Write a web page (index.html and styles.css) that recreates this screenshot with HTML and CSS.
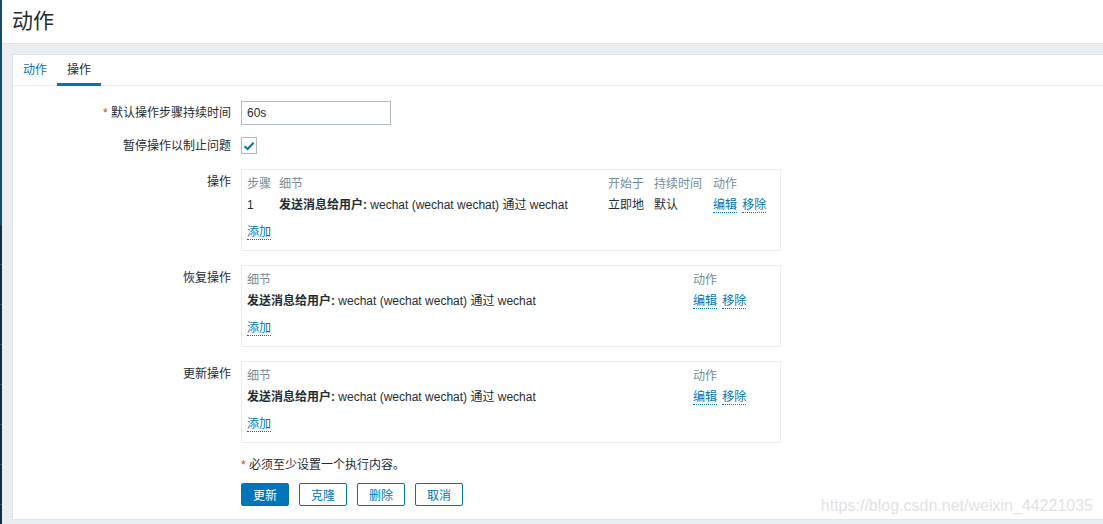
FILE: index.html
```html
<!DOCTYPE html>
<html lang="zh">
<head>
<meta charset="utf-8">
<title>动作</title>
<link rel="stylesheet" href="styles.css">
</head>
<body>
<div class="layout">
  <div class="sidebar"><div class="sb-top"></div><div class="sb-bottom"></div></div>
  <main class="main">
    <header class="page-header"><h1>动作</h1></header>
    <section class="card">
      <nav class="tabs">
        <a class="tab">动作</a>
        <a class="tab active">操作</a>
      </nav>
      <div class="form">
        <div class="row row-input">
          <label class="label"><span class="req">*</span> 默认操作步骤持续时间</label>
          <div class="field"><input class="text-input" type="text" value="60s"></div>
        </div>
        <div class="row row-check">
          <label class="label">暂停操作以制止问题</label>
          <div class="field">
            <span class="checkbox"><svg width="12" height="10" viewBox="0 0 12 10"><path d="M1.5 5.2 L4.6 8 L10.6 1.8" fill="none" stroke="#0275b8" stroke-width="2"/></svg></span>
          </div>
        </div>
        <div class="row row-box">
          <label class="label box-label">操作</label>
          <div class="field">
            <div class="box">
              <table class="ops">
                <colgroup><col style="width:32px"><col style="width:329px"><col style="width:46px"><col style="width:59px"><col></colgroup>
                <thead><tr><th>步骤</th><th>细节</th><th>开始于</th><th>持续时间</th><th>动作</th></tr></thead>
                <tbody><tr><td>1</td><td><b>发送消息给用户:</b> wechat (wechat wechat) 通过 wechat</td><td>立即地</td><td>默认</td><td><a class="link">编辑</a> <a class="link">移除</a></td></tr></tbody>
              </table>
              <div class="add"><a class="link">添加</a></div>
            </div>
          </div>
        </div>
        <div class="row row-box">
          <label class="label box-label">恢复操作</label>
          <div class="field">
            <div class="box">
              <table class="ops">
                <colgroup><col style="width:446px"><col></colgroup>
                <thead><tr><th>细节</th><th>动作</th></tr></thead>
                <tbody><tr><td><b>发送消息给用户:</b> wechat (wechat wechat) 通过 wechat</td><td><a class="link">编辑</a> <a class="link">移除</a></td></tr></tbody>
              </table>
              <div class="add"><a class="link">添加</a></div>
            </div>
          </div>
        </div>
        <div class="row row-box">
          <label class="label box-label">更新操作</label>
          <div class="field">
            <div class="box">
              <table class="ops">
                <colgroup><col style="width:446px"><col></colgroup>
                <thead><tr><th>细节</th><th>动作</th></tr></thead>
                <tbody><tr><td><b>发送消息给用户:</b> wechat (wechat wechat) 通过 wechat</td><td><a class="link">编辑</a> <a class="link">移除</a></td></tr></tbody>
              </table>
              <div class="add"><a class="link">添加</a></div>
            </div>
          </div>
        </div>
        <div class="row row-note">
          <div class="label"></div>
          <div class="field note"><span class="req">*</span> 必须至少设置一个执行内容。</div>
        </div>
        <div class="row row-buttons">
          <div class="label"></div>
          <div class="field buttons">
            <button class="btn primary">更新</button>
            <button class="btn">克隆</button>
            <button class="btn">删除</button>
            <button class="btn">取消</button>
          </div>
        </div>
      </div>
    </section>
  </main>
</div>
<div class="watermark">https://blog.csdn.net/weixin_44221035</div>
</body>
</html>
```
FILE: styles.css
```css
* { box-sizing: border-box; }
html, body { margin: 0; padding: 0; }
body {
  width: 1103px;
  height: 524px;
  overflow: hidden;
  background: #ebeef0;
  font-family: "Liberation Sans", Arial, "Noto Sans CJK SC", sans-serif;
  font-size: 12px;
  color: #1f2c33;
  position: relative;
}
.layout { display: flex; height: 524px; }
.sidebar { width: 2px; flex: none; display: flex; flex-direction: column; }
.sb-top { height: 225px; background: #0e4d75; }
.sb-bottom { flex: 1; background: repeating-linear-gradient(to bottom, #0f2f47 0, #0f2f47 39px, #3a5468 39px, #3a5468 40px); }
.main { flex: 1; display: flex; flex-direction: column; min-width: 0; }
.page-header {
  height: 44px;
  background: #fff;
  border-bottom: 1px solid #dfe4e7;
  padding-left: 10px;
  display: flex;
  align-items: center;
}
.page-header h1 {
  margin: 0;
  font-weight: normal;
  font-size: 21px;
  line-height: 1;
  color: #1f2c33;
  position: relative;
  top: -1px;
}
.card {
  margin: 10px -20px 0 10px;
  background: #fff;
  border: 1px solid #dfe4e7;
  height: 466px;
}
.tabs {
  display: flex;
  height: 31px;
  border-bottom: 1px solid #ebeef0;
  padding-left: 0;
}
.tab {
  display: block;
  padding: 2px 10px 0;
  line-height: 27px;
  color: #0275b8;
  border-bottom: 3px solid transparent;
  height: 31px;
}
.tab.active { color: #1f2c33; border-bottom-color: #0275b8; }
.form { padding-top: 15px; }
.row { display: flex; align-items: flex-start; }
.label {
  width: 218px;
  flex: none;
  text-align: right;
  line-height: 16px;
}
.field { margin-left: 10px; flex: none; }
.req { color: #e33734; }
.row-input .label { padding-top: 4px; }
.text-input {
  width: 150px;
  height: 24px;
  border: 1px solid #acbbc2;
  border-radius: 0;
  padding: 0 5px;
  font-family: inherit;
  font-size: 12px;
  color: #1f2c33;
  outline: none;
  display: block;
}
.row-check { margin-top: 12px; }
.row-check .label { padding-top: 1px; }
.checkbox {
  display: flex;
  width: 16px;
  height: 17px;
  border: 1px solid #acbbc2;
  align-items: center;
  justify-content: center;
}
.row-box { margin-top: 15px; }
.row-box + .row-box { margin-top: 14px; }
.box-label { padding-top: 5px; }
.box {
  width: 540px;
  border: 1px solid #ebeef0;
  padding: 6px 5px 10px;
}
.ops { border-collapse: collapse; width: 100%; table-layout: fixed; }
.ops th {
  text-align: left;
  font-weight: normal;
  color: #768d99;
  padding: 0;
  line-height: 16px;
  white-space: nowrap;
}
.ops td {
  padding: 5px 0 0;
  line-height: 16px;
  white-space: nowrap;
  vertical-align: top;
}
.ops td b { font-weight: bold; }
.link {
  color: #0275b8;
  text-decoration: none;
  border-bottom: 1px dotted #0275b8;
  cursor: pointer;
}
.ops td .link + .link { margin-left: 2px; }
.add { margin-top: 11px; line-height: 16px; }
.row-note { margin-top: 14px; }
.note { line-height: 16px; }
.row-buttons { margin-top: 10px; }
.buttons { display: flex; gap: 10px; }
.btn {
  width: 48px;
  height: 23px;
  border: 1px solid #0275b8;
  background: #fff;
  color: #0275b8;
  font-family: inherit;
  font-size: 12px;
  padding: 0;
  border-radius: 2px;
}
.btn.primary { background: #0275b8; color: #fff; }
.watermark {
  position: absolute;
  right: 10px;
  top: 497px;
  font-size: 16px;
  color: #e3e3e3;
  font-family: "Liberation Sans", Arial, sans-serif;
}
```
